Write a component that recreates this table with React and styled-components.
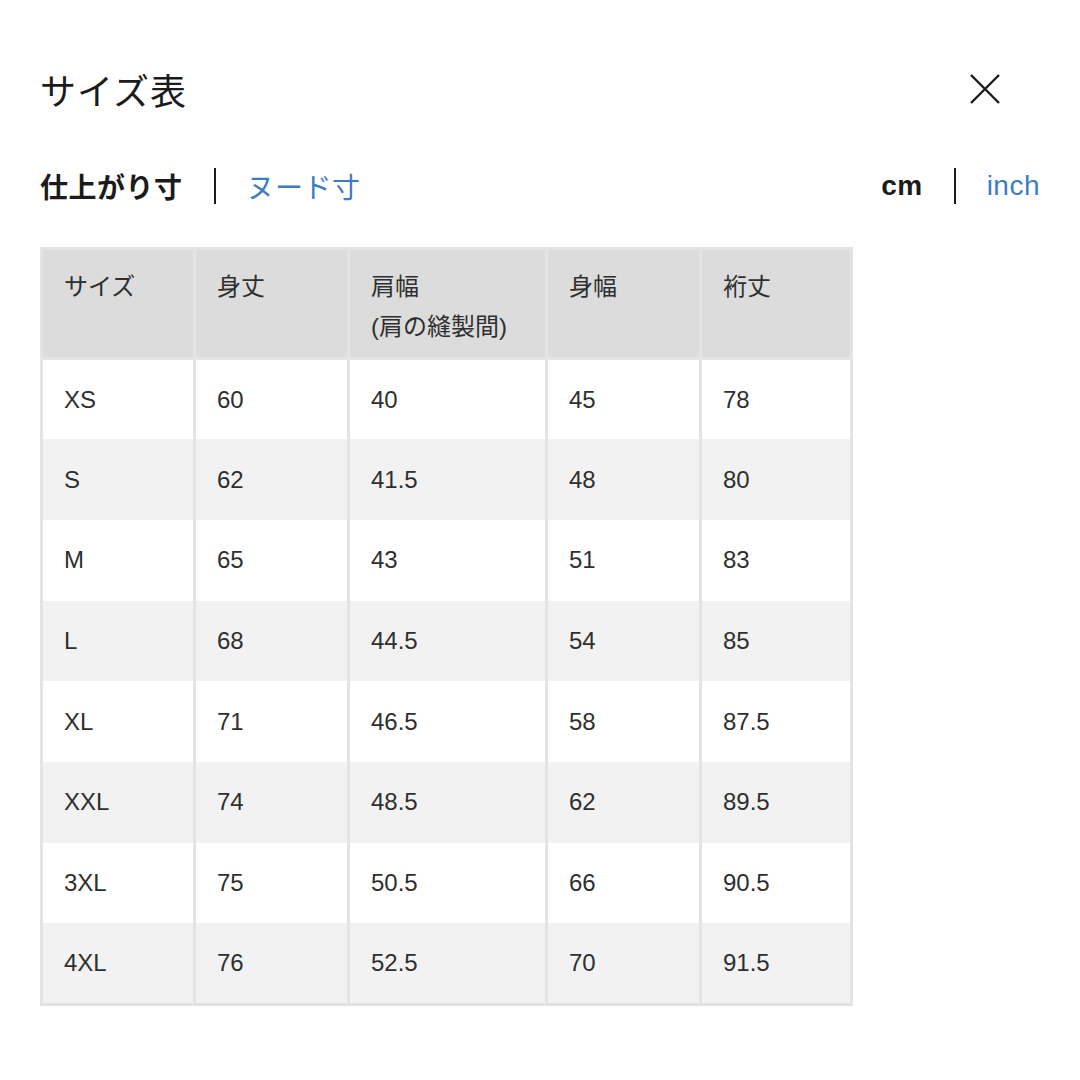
import React from 'react'
import styled, { createGlobalStyle } from 'styled-components'

const GlobalStyle = createGlobalStyle`
  body {
    margin: 0;
    background: #fff;
    font-family: "Liberation Sans", "Noto Sans CJK JP", sans-serif;
    color: #1b1b1b;
  }
`

const Page = styled.div`
  width: 1080px;
  height: 1080px;
  padding: 62px 40px 0 40px;
  box-sizing: border-box;
`

const Header = styled.div`
  display: flex;
  align-items: center;
  justify-content: space-between;
  height: 54px;
`

const Title = styled.h1`
  margin: 0;
  font-size: 36px;
  font-weight: 400;
  letter-spacing: 1px;
  color: #1b1b1b;
`

const CloseButton = styled.button`
  border: 0;
  background: none;
  padding: 0;
  margin-right: 38px;
  margin-top: -1px;
  width: 34px;
  height: 34px;
  display: flex;
  align-items: center;
  justify-content: center;
`

const Tabs = styled.div`
  display: flex;
  align-items: center;
  justify-content: space-between;
  margin-top: 50px;
  height: 40px;
`

const TabGroup = styled.div`
  display: flex;
  align-items: center;
`

const Tab = styled.span`
  font-size: 28px;
  font-weight: ${p => (p.$active ? 700 : 400)};
  color: ${p => (p.$active ? '#1b1b1b' : '#3b7cc4')};
  letter-spacing: 0.5px;
`

const Divider = styled.span`
  width: 2px;
  height: 36px;
  background: #1b1b1b;
  margin: 0 ${p => p.$gap}px;
`

const Table = styled.table`
  margin-top: 41px;
  border-collapse: collapse;
  table-layout: fixed;
  width: 810px;
  border: 3px solid #e2e2e2;
`

const HeadCell = styled.th`
  background: #dcdcdc;
  border: 3px solid #e4e4e4;
  height: 110px;
  box-sizing: border-box;
  padding: 17px 20px 0 21px;
  text-align: left;
  vertical-align: top;
  font-size: 24px;
  font-weight: 400;
  line-height: 40px;
  color: #2f2f2f;
`

const Row = styled.tr`
  background: ${p => (p.$alt ? '#f2f2f2' : '#ffffff')};
`

const Cell = styled.td`
  border-left: 3px solid #e4e4e4;
  border-right: 3px solid #e4e4e4;
  height: 80.7px;
  padding: 0 20px 0 21px;
  font-size: 24px;
  color: #2f2f2f;
  box-sizing: border-box;
  vertical-align: middle;
`

const widths = [153, 154, 198, 154, 151]
const heads = [['サイズ'], ['身丈'], ['肩幅', '(肩の縫製間)'], ['身幅'], ['裄丈']]
const rows = [
  ['XS', '60', '40', '45', '78'],
  ['S', '62', '41.5', '48', '80'],
  ['M', '65', '43', '51', '83'],
  ['L', '68', '44.5', '54', '85'],
  ['XL', '71', '46.5', '58', '87.5'],
  ['XXL', '74', '48.5', '62', '89.5'],
  ['3XL', '75', '50.5', '66', '90.5'],
  ['4XL', '76', '52.5', '70', '91.5'],
]

const App = () => {
  return (
    <Page>
      <GlobalStyle />
      <Header>
        <Title>サイズ表</Title>
        <CloseButton aria-label="close">
          <svg width="32" height="32" viewBox="0 0 32 32">
            <path d="M2 2 L30 30 M30 2 L2 30" stroke="#1b1b1b" strokeWidth="2.4" fill="none" />
          </svg>
        </CloseButton>
      </Header>
      <Tabs>
        <TabGroup>
          <Tab $active>仕上がり寸</Tab>
          <Divider $gap={31} />
          <Tab>ヌード寸</Tab>
        </TabGroup>
        <TabGroup>
          <Tab $active>cm</Tab>
          <Divider $gap={31} />
          <Tab>inch</Tab>
        </TabGroup>
      </Tabs>
      <Table>
        <colgroup>
          {widths.map((w, i) => <col key={i} style={{ width: w }} />)}
        </colgroup>
        <thead>
          <tr>
            {heads.map((h, i) => (
              <HeadCell key={i}>
                {h.map((line, j) => <div key={j}>{line}</div>)}
              </HeadCell>
            ))}
          </tr>
        </thead>
        <tbody>
          {rows.map((r, i) => (
            <Row key={i} $alt={i % 2 === 1}>
              {r.map((v, j) => <Cell key={j}>{v}</Cell>)}
            </Row>
          ))}
        </tbody>
      </Table>
    </Page>
  )
}

export default App
